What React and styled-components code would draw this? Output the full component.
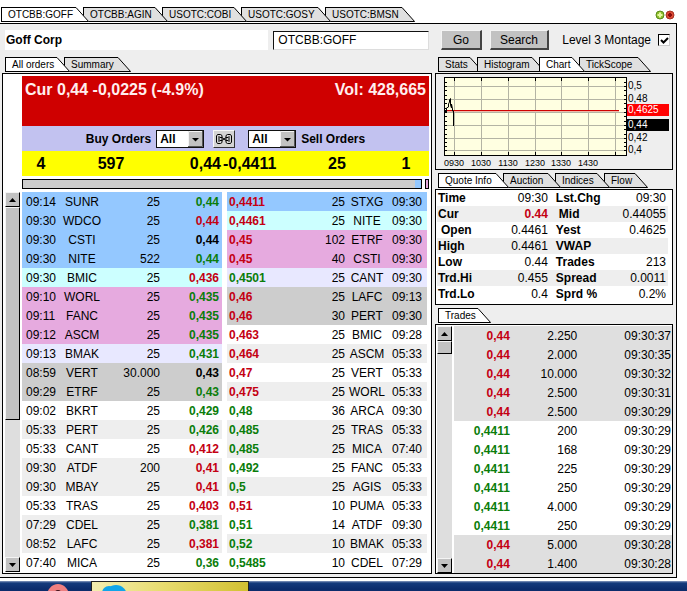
import React from "react";
import styled, { createGlobalStyle, css } from "styled-components";

const GlobalStyle = createGlobalStyle`
  * { box-sizing: border-box; }
  body {
    margin: 0;
    background: #fff;
    color: #000;
    font: 12px/16px "Liberation Sans", Arial, sans-serif;
  }
  button, input, select { font: inherit; color: inherit; margin: 0; }
`;

const COLORS = {
  blue: "#94c8ff",
  cyan: "#ccffff",
  pink: "#e6aadf",
  lavender: "#e8e8ff",
  grey: "#cdcdcd",
  light: "#eeeeee",
  white: "#ffffff",
  shade: "#dfdfdf",
  up: "#0a7d0a",
  down: "#c40012",
  flat: "#000000",
};

const Page = styled.div`
  min-height: 100vh;
  display: flex;
  flex-direction: column;
  overflow: hidden;
`;

const TopBar = styled.header`
  display: flex;
  justify-content: space-between;
  padding: 7px 12px 0 1px;
`;

const WindowDots = styled.svg`
  width: 20px;
  height: 10px;
  margin-top: 3px;
`;

const Frame = styled.main`
  margin: 0 10px 3px 0;
  border: solid #000;
  border-width: 1px 1px 1px 0;
  background: #eeeeee;
  padding: 6px 3px 3px 2px;
`;

const Columns = styled.div`
  display: grid;
  grid-template-columns: minmax(0, 430fr) minmax(0, 238fr);
  column-gap: 3px;
`;

const Toolbar = styled(Columns)`
  margin-bottom: 7px;
`;

const ToolGroup = styled.div`
  display: flex;
  align-items: center;
  height: 20px;
  ${(p) => (p.$end ? "padding: 0 3px 0 6px; gap: 8px;" : "padding: 0 3px;")}
`;

const CompanyName = styled.h1`
  flex: 269;
  margin: 0 5px 0 0;
  padding: 0 1px;
  background: #fff;
  font-size: 12px;
  line-height: 20px;
`;

const SymbolInput = styled.input`
  flex: 150;
  min-width: 0;
  height: 19px;
  padding: 0 4px;
  background: #fff;
  border: 1px solid #ddd;
  border-top-color: #111;
  border-left-color: #111;
  border-radius: 0;
  outline: 0;
`;

const ToolButton = styled.button`
  height: 20px;
  padding: 0 ${(p) => (p.$wide ? 9 : 11)}px;
  background: #c2c2c2;
  border: 1px solid #f4f4f4;
  border-right: 2px solid #444;
  border-bottom: 2px solid #444;
  line-height: 16px;
`;

const CheckLabel = styled.label`
  display: flex;
  flex: 1;
  align-items: center;
  justify-content: flex-end;
  gap: 7px;
  white-space: nowrap;
`;

const CheckWrap = styled.span`
  position: relative;
  display: flex;
  svg {
    position: absolute;
    inset: 0;
    pointer-events: none;
    visibility: hidden;
  }
  input:checked + svg { visibility: visible; }
`;

const CheckBox = styled.input`
  appearance: none;
  width: 12px;
  height: 12px;
  background: #fff;
  border: 1px solid #ccc;
  border-top-color: #000;
  border-left-color: #000;
`;

/* ---- tabs ---- */

const TabRow = styled.div`
  display: flex;
  height: 15px;
  margin-bottom: 1px;
  padding-left: ${(p) => p.$inset}px;
`;

const TabButton = styled.button`
  position: relative;
  z-index: ${(p) => p.$level};
  display: flex;
  justify-content: space-between;
  width: ${(p) => p.$width}px;
  height: 15px;
  margin-right: -6px;
  padding: 0;
  border: 0;
  background: none;
  font-size: 10px;
  line-height: 13px;
  white-space: nowrap;
`;

const TabFace = styled.span`
  flex: 1;
  height: 15px;
  padding-left: 6px;
  text-align: left;
  border: 1px solid #000;
  border-right: 0;
  background: ${(p) => (p.$active ? "#fff" : "#e0e0e0")};
`;

const TabSlant = styled.svg`
  flex: none;
  width: 13px;
  height: 15px;
`;

function Tabs({ label, items, active, inset }) {
  return (
    <TabRow role="tablist" aria-label={label} $inset={inset}>
      {items.map(([text, width], i) => {
        const on = i === active;
        const level = on ? 20 : i < active ? i + 1 : 19 - i;
        return (
          <TabButton key={text} type="button" role="tab" aria-selected={on} $level={level} $width={width}>
            <TabFace $active={on}>{text}</TabFace>
            <TabSlant viewBox="0 0 13 15" aria-hidden="true">
              <path d="M0 0L13 15H0Z" fill={on ? "#fff" : "#e0e0e0"} />
              <path d="M0 .5L12.6 14.5H0" fill="none" stroke="#000" />
            </TabSlant>
          </TabButton>
        );
      })}
    </TabRow>
  );
}

/* ---- panels ---- */

const Column = styled.section`
  display: flex;
  flex-direction: column;
`;

const Panel = styled.div`
  border: 1px solid #000;
  background: ${(p) => p.$bg || "#fff"};
  margin-bottom: ${(p) => p.$gap || 0}px;
  ${(p) => p.$grow && "flex: 1;"}
  ${(p) => p.$pad && css`padding: ${p.$pad};`}
`;

const Summary = styled.div`
  margin-left: 17px;
`;

const PriceBanner = styled.div`
  display: flex;
  justify-content: space-between;
  height: 50px;
  padding: 5px 3px;
  background: #cf0000;
  color: #ffeeee;
  font-size: 16px;
  font-weight: bold;
  line-height: 18px;
`;

const FilterBar = styled.div`
  display: flex;
  align-items: center;
  justify-content: center;
  gap: 5px;
  height: 25px;
  background: #c2c2f0;
  font-weight: bold;
`;

const FilterLabel = styled.label`
  display: flex;
  align-items: center;
  gap: 5px;
`;

const SelectWrap = styled.span`
  position: relative;
  display: flex;
  width: 48px;
  svg {
    position: absolute;
    right: 1px;
    top: 1px;
    pointer-events: none;
  }
`;

const Select = styled.select`
  appearance: none;
  width: 100%;
  height: 18px;
  padding: 0 3px;
  border: 1px solid #111;
  border-radius: 0;
  background: #fff;
  font-weight: bold;
  line-height: 16px;
`;

const LinkButton = styled.button`
  display: flex;
  align-items: center;
  justify-content: center;
  width: 22px;
  height: 18px;
  margin: 0 8px 0 4px;
  padding: 0;
  background: #d4d4d4;
  border: 1px solid #f8f8f8;
  border-right-color: #333;
  border-bottom-color: #333;
`;

const BestRow = styled.div`
  display: grid;
  grid-template-columns: 38fr 102fr 59fr 82fr 68fr 58fr;
  height: 25px;
  background: #ffff00;
  font-size: 16px;
  font-weight: bold;
  line-height: 26px;
  text-align: center;
`;

const BestCell = styled.span`
  text-align: ${(p) => p.$align || "center"};
  padding-left: ${(p) => p.$left || 0}px;
`;

const DepthBar = styled.div`
  display: flex;
  gap: 3px;
  height: 10px;
  margin: 3px 0;
`;

const DepthMain = styled.div`
  flex: 1;
  border: 1px solid #000;
  background: linear-gradient(to left, #94c8ff 6px, #cdcdcd 6px);
`;

const DepthEnd = styled.div`
  width: 4px;
  border: 1px solid #000;
  background: #e6aadf;
`;

/* ---- scroll bar ---- */

const Scroll = styled.div`
  flex: none;
  display: flex;
  flex-direction: column;
  width: 15px;
  margin-right: 2px;
  background: #dedede;
`;

const ScrollButton = styled.button`
  display: flex;
  align-items: center;
  justify-content: center;
  flex: none;
  height: 15px;
  padding: 0;
  background: #c2c2c2;
  border: 1px solid #f4f4f4;
  border-right-color: #000;
  border-bottom-color: #000;
`;

const ScrollThumb = styled.div`
  height: ${(p) => p.$size};
  margin-bottom: auto;
  background: #c2c2c2;
  border: 1px solid #f4f4f4;
  border-right-color: #000;
  border-bottom-color: #000;
`;

function ScrollBar({ size }) {
  return (
    <Scroll>
      <ScrollButton type="button" aria-label="Scroll up">
        <svg width="7" height="4" viewBox="0 0 7 4"><path d="M0 4L3.5 0L7 4Z" /></svg>
      </ScrollButton>
      <ScrollThumb $size={size} />
      <ScrollButton type="button" aria-label="Scroll down">
        <svg width="7" height="4" viewBox="0 0 7 4"><path d="M0 0L3.5 4L7 0Z" /></svg>
      </ScrollButton>
    </Scroll>
  );
}

/* ---- tables ---- */

const Book = styled.div`
  display: flex;
  padding-right: 2px;
`;

const BookSides = styled.div`
  flex: 1;
  display: grid;
  grid-template-columns: 1fr 1fr;
  gap: 5px;
`;

const Table = styled.table`
  width: 100%;
  border-collapse: collapse;
  table-layout: fixed;
`;

const Col = styled.col`
  width: ${(p) => p.$share}%;
`;

const Row = styled.tr`
  height: ${(p) => p.$height || 19}px;
  background: ${(p) => COLORS[p.$tint]};
`;

const Cell = styled.td`
  padding: 0 ${(p) => p.$right || 0}px 0 ${(p) => p.$left || 0}px;
  text-align: ${(p) => p.$align || "left"};
  white-space: nowrap;
`;

const PriceCell = styled(Cell)`
  font-weight: bold;
  color: ${(p) => COLORS[p.$trend]};
`;

const NameCell = styled.th`
  padding: 0 0 0 ${(p) => p.$left}px;
  text-align: left;
  font-weight: bold;
  white-space: nowrap;
`;

const TradeBody = styled.div`
  display: flex;
`;

const BUY = [
  ["09:14", "SUNR", "25", "0,44", "up", "blue"],
  ["09:30", "WDCO", "25", "0,44", "down", "blue"],
  ["09:30", "CSTI", "25", "0,44", "flat", "blue"],
  ["09:30", "NITE", "522", "0,44", "up", "blue"],
  ["09:30", "BMIC", "25", "0,436", "down", "cyan"],
  ["09:10", "WORL", "25", "0,435", "up", "pink"],
  ["09:11", "FANC", "25", "0,435", "up", "pink"],
  ["09:12", "ASCM", "25", "0,435", "up", "pink"],
  ["09:13", "BMAK", "25", "0,431", "up", "lavender"],
  ["08:59", "VERT", "30.000", "0,43", "flat", "grey"],
  ["09:29", "ETRF", "25", "0,43", "up", "grey"],
  ["09:02", "BKRT", "25", "0,429", "up", "white"],
  ["05:33", "PERT", "25", "0,426", "up", "light"],
  ["05:33", "CANT", "25", "0,412", "down", "white"],
  ["09:30", "ATDF", "200", "0,41", "down", "light"],
  ["09:30", "MBAY", "25", "0,41", "down", "light"],
  ["05:33", "TRAS", "25", "0,403", "down", "white"],
  ["07:29", "CDEL", "25", "0,381", "up", "light"],
  ["08:52", "LAFC", "25", "0,381", "down", "light"],
  ["07:40", "MICA", "25", "0,36", "up", "white"],
];

const SELL = [
  ["0,4411", "25", "STXG", "09:30", "down", "blue"],
  ["0,4461", "25", "NITE", "09:30", "down", "cyan"],
  ["0,45", "102", "ETRF", "09:30", "down", "pink"],
  ["0,45", "40", "CSTI", "09:30", "down", "pink"],
  ["0,4501", "25", "CANT", "09:30", "up", "lavender"],
  ["0,46", "25", "LAFC", "09:13", "down", "grey"],
  ["0,46", "30", "PERT", "09:30", "down", "grey"],
  ["0,463", "25", "BMIC", "09:28", "down", "white"],
  ["0,464", "25", "ASCM", "05:33", "down", "light"],
  ["0,47", "25", "VERT", "05:33", "down", "white"],
  ["0,475", "25", "WORL", "05:33", "down", "light"],
  ["0,48", "36", "ARCA", "09:30", "up", "white"],
  ["0,485", "25", "TRAS", "05:33", "up", "light"],
  ["0,485", "25", "MICA", "07:40", "up", "light"],
  ["0,492", "25", "FANC", "05:33", "up", "white"],
  ["0,5", "25", "AGIS", "05:33", "up", "light"],
  ["0,51", "10", "PUMA", "05:33", "down", "white"],
  ["0,51", "14", "ATDF", "09:30", "up", "white"],
  ["0,52", "10", "BMAK", "05:33", "up", "light"],
  ["0,5485", "10", "CDEL", "07:29", "up", "white"],
];

const QUOTE = [
  ["Time", "09:30", "Lst.Chg", "09:30"],
  ["Cur", "0.44", "Mid", "0.44055"],
  ["Open", "0.4461", "Yest", "0.4625"],
  ["High", "0.4461", "VWAP", ""],
  ["Low", "0.44", "Trades", "213"],
  ["Trd.Hi", "0.455", "Spread", "0.0011"],
  ["Trd.Lo", "0.4", "Sprd %", "0.2%"],
];

const TRADES = [
  ["0,44", "2.250", "09:30:37"],
  ["0,44", "2.000", "09:30:35"],
  ["0,44", "10.000", "09:30:32"],
  ["0,44", "2.500", "09:30:31"],
  ["0,44", "2.500", "09:30:29"],
  ["0,4411", "200", "09:30:29"],
  ["0,4411", "168", "09:30:29"],
  ["0,4411", "225", "09:30:29"],
  ["0,4411", "250", "09:30:29"],
  ["0,4411", "4.000", "09:30:29"],
  ["0,4411", "250", "09:30:29"],
  ["0,44", "5.000", "09:30:28"],
  ["0,44", "1.400", "09:30:28"],
];

function FilterSelect({ name }) {
  return (
    <SelectWrap>
      <Select aria-label={name} defaultValue="All">
        <option>All</option>
      </Select>
      <svg width="15" height="16" viewBox="0 0 15 16" aria-hidden="true">
        <path d="M0 0H15V16H0Z" fill="#c2c2c2" />
        <path d="M.5 16V.5H15" fill="none" stroke="#f4f4f4" />
        <path d="M14.5 0V15.5H0" fill="none" stroke="#555" />
        <path d="M4 7H11L7.5 10.5Z" />
      </svg>
    </SelectWrap>
  );
}

const ChartSvg = styled.svg`
  display: block;
  width: 100%;
  height: 95px;
  font-family: "Liberation Sans", Arial, sans-serif;
  font-size: 10px;
`;

const AxisTime = styled.text`
  font-size: 9px;
  text-anchor: middle;
`;

function PriceChart() {
  const xs = [18, 45, 72, 99, 125, 152, 179];
  const ys = [12, 25, 38, 51, 64, 76];
  const ticks = [8, 12, 16, 21, 25, 29, 34, 38, 42, 47, 51, 55, 60, 64, 68, 72, 76];
  return (
    <ChartSvg viewBox="0 0 236 95" role="img" aria-label="Intraday price chart">
      <rect x="8.5" y="3.5" width="182" height="78" fill="#ffffe1" />
      <path
        d={xs.map((x) => `M${x}.5 4V81`).join("") + ys.map((y) => `M9 ${y}.5H190`).join("")}
        stroke="#b4b4a4"
        fill="none"
      />
      <path
        d={xs.map((x) => `M${x}.5 4v3M${x}.5 81v-3`).join("") + ticks.map((y) => `M9 ${y}.5h2M190 ${y}.5h-2`).join("")}
        stroke="#000"
        fill="none"
      />
      <rect x="9" y="36" width="174" height="1" fill="#d00000" />
      <rect x="9" y="37" width="174" height="1" fill="#f0b8a8" />
      <path
        d="M9.5 38.5V36L10.5 38V34L12.5 33V30L13.5 28V26L14.5 24.5V31L15.5 34V30L16.5 35V37H17.5V52"
        fill="none"
        stroke="#000"
      />
      <rect x="8.5" y="3.5" width="182" height="78" fill="none" stroke="#000" />
      <rect x="191" y="30" width="42" height="12" fill="#ff0000" />
      <rect x="191" y="45" width="42" height="12" fill="#000" />
      <text x="192" y="15">0,5</text>
      <text x="192" y="28">0,48</text>
      <text x="192" y="39" fill="#fff">0,4625</text>
      <text x="192" y="54" fill="#fff">0,44</text>
      <text x="192" y="67">0,42</text>
      <text x="192" y="79">0,4</text>
      {["0930", "1030", "1130", "1230", "1330", "1430"].map((t, i) => (
        <AxisTime key={t} x={xs[i]} y="92">{t}</AxisTime>
      ))}
    </ChartSvg>
  );
}

const TaskBar = styled.footer`
  display: flex;
  flex: 1;
  min-height: 10px;
  max-height: 30px;
  background: linear-gradient(#8a9cc0 0, #143a7c 2px, #0c2c6c 8px);
`;

const TaskLauncher = styled.div`
  flex: none;
  width: 91px;
  height: 10px;
  padding-left: 46px;
  overflow: hidden;
`;

const TaskItem = styled.div`
  flex: none;
  width: 158px;
  height: 10px;
  padding-left: 9px;
  overflow: hidden;
  border: solid #222;
  border-width: 1px 1px 0;
  background: linear-gradient(100deg, #f4eeb0, #e8dc70 45%, #d2c032);
`;

export default function App() {
  return (
    <>
      <GlobalStyle />
      <Page>
        <TopBar>
          <Tabs
            label="Symbols"
            inset={0}
            active={0}
            items={[["OTCBB:GOFF", 88], ["OTCBB:AGIN", 85], ["USOTC:COBI", 85], ["USOTC:GOSY", 90], ["USOTC:BMSN", 90]]}
          />
          <WindowDots viewBox="0 0 20 10" aria-hidden="true">
            <circle cx="5" cy="5" r="4" fill="#8ec02a" stroke="#5a8a1c" />
            <path d="M5 2.5V7.5M2.5 5H7.5" stroke="#e4f7a0" strokeWidth="2" />
            <circle cx="15" cy="5" r="4" fill="#dc4a34" stroke="#a83424" />
            <path d="M15 3V7M13 5H17" stroke="#8c0c0c" strokeWidth="2" />
          </WindowDots>
        </TopBar>

        <Frame>
          <Toolbar>
            <ToolGroup>
              <CompanyName>Goff Corp</CompanyName>
              <SymbolInput aria-label="Symbol" defaultValue="OTCBB:GOFF" />
            </ToolGroup>
            <ToolGroup $end>
              <ToolButton type="button">Go</ToolButton>
              <ToolButton type="button" $wide>Search</ToolButton>
              <CheckLabel>
                Level 3 Montage
                <CheckWrap>
                  <CheckBox type="checkbox" defaultChecked />
                  <svg width="12" height="12" viewBox="0 0 12 12"><path d="M3 6L5.5 8.5L10 4" fill="none" stroke="#000" strokeWidth="2" /></svg>
                </CheckWrap>
              </CheckLabel>
            </ToolGroup>
          </Toolbar>

          <Columns>
            <Column>
              <Tabs label="Orders" inset={3} active={0} items={[["All orders", 65], ["Summary", 67]]} />
              <Panel $grow $pad="2px 2px 1px">
                <Summary>
                  <PriceBanner>
                    <span>Cur 0,44 -0,0225 (-4.9%)</span>
                    <span>Vol: 428,665</span>
                  </PriceBanner>
                  <FilterBar>
                    <FilterLabel>
                      Buy Orders
                      <FilterSelect name="Buy Orders" />
                    </FilterLabel>
                    <LinkButton type="button" aria-label="Link filters">
                      <svg width="18" height="12" viewBox="0 0 18 12" fill="none" stroke="#000">
                        <path d="M7 4V2.5L5.5 1.5H2.5L1.5 3V9L2.5 10.5H5.5L7 9.5V8M11 4V2.5L12.5 1.5H15.5L16.5 3V9L15.5 10.5H12.5L11 9.5V8" />
                        <path d="M5 4.5L4 3.5V8.5L5 7.5M13 4.5L14 3.5V8.5L13 7.5M5 4.5H7.5L8.5 6L7.5 7.5H5M13 4.5H10.5L9.5 6L10.5 7.5H13M6 6H12" />
                      </svg>
                    </LinkButton>
                    <FilterLabel>
                      <FilterSelect name="Sell Orders" />
                      Sell Orders
                    </FilterLabel>
                  </FilterBar>
                  <BestRow>
                    <BestCell>4</BestCell>
                    <BestCell>597</BestCell>
                    <BestCell $align="right">0,44</BestCell>
                    <BestCell $align="left" $left={2}>-0,4411</BestCell>
                    <BestCell>25</BestCell>
                    <BestCell $left={12}>1</BestCell>
                  </BestRow>
                  <DepthBar>
                    <DepthMain />
                    <DepthEnd />
                  </DepthBar>
                </Summary>
                <Book>
                  <ScrollBar size="56%" />
                  <BookSides>
                    <Table aria-label="Buy orders">
                      <colgroup><Col $share={19} /><Col $share={22} /><Col $share={28} /><Col $share={31} /></colgroup>
                      <tbody>
                        {BUY.map(([time, mm, size, price, trend, tint], i) => (
                          <Row key={i} $tint={tint}>
                            <Cell $left={4}>{time}</Cell>
                            <Cell $align="center">{mm}</Cell>
                            <Cell $align="right">{size}</Cell>
                            <PriceCell $align="right" $right={3} $trend={trend}>{price}</PriceCell>
                          </Row>
                        ))}
                      </tbody>
                    </Table>
                    <Table aria-label="Sell orders">
                      <colgroup><Col $share={29} /><Col $share={30} /><Col $share={22} /><Col $share={19} /></colgroup>
                      <tbody>
                        {SELL.map(([price, size, mm, time, trend, tint], i) => (
                          <Row key={i} $tint={tint}>
                            <PriceCell $left={2} $trend={trend}>{price}</PriceCell>
                            <Cell $align="right">{size}</Cell>
                            <Cell $align="center">{mm}</Cell>
                            <Cell $align="right" $right={5}>{time}</Cell>
                          </Row>
                        ))}
                      </tbody>
                    </Table>
                  </BookSides>
                </Book>
              </Panel>
            </Column>

            <Column>
              <Tabs
                label="Charts"
                inset={3}
                active={2}
                items={[["Stats", 45], ["Histogram", 68], ["Chart", 46], ["TickScope", 72]]}
              />
              <Panel $bg="#eeeeee" $gap={3}>
                <PriceChart />
              </Panel>

              <Tabs
                label="Quote"
                inset={3}
                active={0}
                items={[["Quote Info", 71], ["Auction", 58], ["Indices", 55], ["Flow", 44]]}
              />
              <Panel $gap={3} $pad="0 4px 2px 1px">
                <Table aria-label="Quote info">
                  <colgroup><Col $share={20} /><Col $share={28} /><Col $share={26} /><Col $share={26} /></colgroup>
                  <tbody>
                    {QUOTE.map(([a, av, b, bv], i) => (
                      <Row key={a} $height={16} $tint={i % 2 ? "light" : "white"}>
                        <NameCell scope="row" $left={a === "Open" ? 4 : 1}>{a}</NameCell>
                        {a === "Cur" ? (
                          <PriceCell $align="right" $trend="down">{av}</PriceCell>
                        ) : (
                          <Cell $align="right">{av}</Cell>
                        )}
                        <NameCell scope="row" $left={b === "Mid" ? 11 : 8}>{b}</NameCell>
                        <Cell $align="right" $right={2}>{bv}</Cell>
                      </Row>
                    ))}
                  </tbody>
                </Table>
              </Panel>

              <Tabs label="Trade list" inset={3} active={0} items={[["Trades", 53]]} />
              <Panel $grow $pad="1px 0 0 1px">
                <TradeBody>
                  <ScrollBar size="13px" />
                  <Table aria-label="Trades">
                    <colgroup><Col $share={27} /><Col $share={30} /><Col $share={43} /></colgroup>
                    <tbody>
                      {TRADES.map(([price, size, time], i) => (
                        <Row key={i} $tint={price === "0,44" ? "shade" : "white"}>
                          <PriceCell $align="right" $right={3} $trend={price === "0,44" ? "down" : "up"}>{price}</PriceCell>
                          <Cell $align="right" $right={1}>{size}</Cell>
                          <Cell $align="right" $right={1}>{time}</Cell>
                        </Row>
                      ))}
                    </tbody>
                  </Table>
                </TradeBody>
              </Panel>
            </Column>
          </Columns>
        </Frame>

        <TaskBar>
          <TaskLauncher>
            <svg width="24" height="24" viewBox="0 0 24 24" aria-hidden="true">
              <ellipse cx="12" cy="15" rx="8" ry="9" fill="#3a0f18" stroke="#ee7f80" strokeWidth="6" />
            </svg>
          </TaskLauncher>
          <TaskItem>
            <svg width="28" height="24" viewBox="0 0 28 24" aria-hidden="true">
              <circle cx="8" cy="11" r="7" fill="#12a5e8" />
              <circle cx="15" cy="14" r="11" fill="#12a5e8" />
            </svg>
          </TaskItem>
        </TaskBar>
      </Page>
    </>
  );
}
